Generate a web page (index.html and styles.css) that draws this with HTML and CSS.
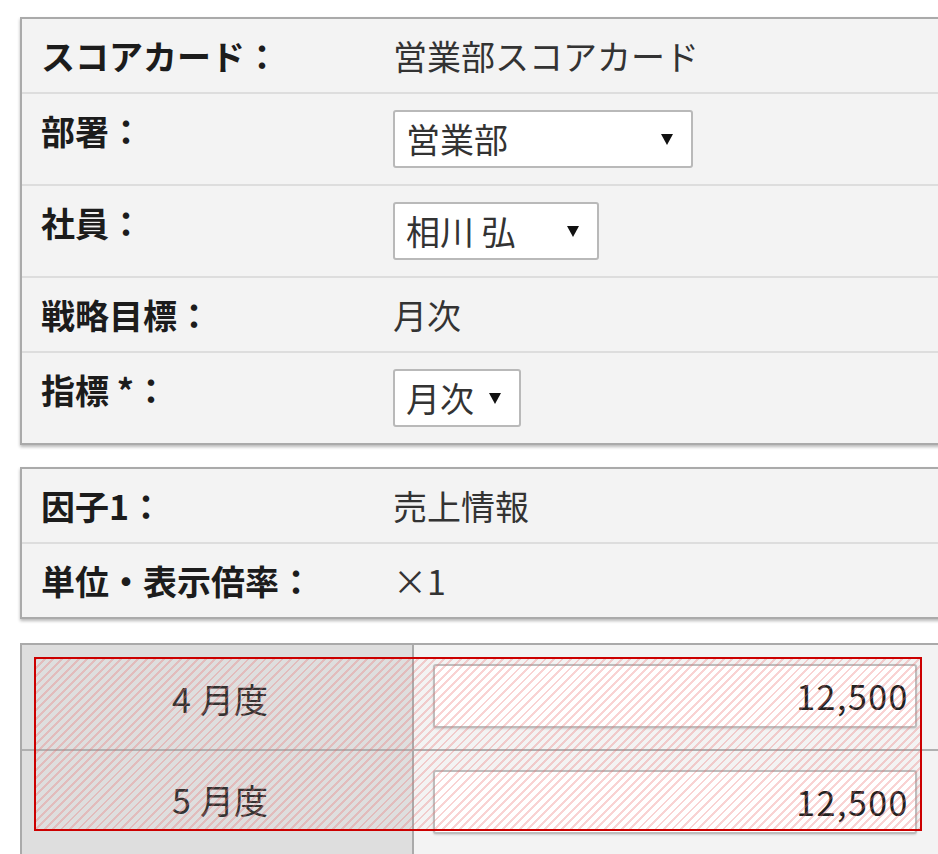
FILE: index.html
```html
<!DOCTYPE html>
<html lang="ja">
<head>
<meta charset="utf-8">
<title>スコアカード</title>
<link rel="stylesheet" href="styles.css">
</head>
<body>
<div class="page">
  <section class="panel">
    <div class="row">
      <div class="label">スコアカード：</div>
      <div class="value">営業部スコアカード</div>
    </div>
    <div class="row">
      <div class="label">部署：</div>
      <div class="value">
        <div class="select sel-dept"><span>営業部</span><svg class="arrow" viewBox="0 0 12 11" width="12" height="11"><polygon points="0,0 12,0 6,11" fill="#111"/></svg></div>
      </div>
    </div>
    <div class="row">
      <div class="label">社員：</div>
      <div class="value">
        <div class="select sel-emp"><span>相川 弘</span><svg class="arrow" viewBox="0 0 12 11" width="12" height="11"><polygon points="0,0 12,0 6,11" fill="#111"/></svg></div>
      </div>
    </div>
    <div class="row">
      <div class="label">戦略目標：</div>
      <div class="value">月次</div>
    </div>
    <div class="row">
      <div class="label">指標 *：</div>
      <div class="value">
        <div class="select sel-metric"><span>月次</span><svg class="arrow" viewBox="0 0 12 11" width="12" height="11"><polygon points="0,0 12,0 6,11" fill="#111"/></svg></div>
      </div>
    </div>
  </section>

  <section class="panel">
    <div class="row">
      <div class="label">因子1：</div>
      <div class="value">売上情報</div>
    </div>
    <div class="row">
      <div class="label">単位・表示倍率：</div>
      <div class="value">×1</div>
    </div>
  </section>

  <section class="panel grid-panel">
    <div class="grow">
      <div class="gcell-label"><span class="num">4</span>月度</div>
      <div class="gcell-input"><div class="numbox">12,500</div></div>
    </div>
    <div class="grow grow-last">
      <div class="gcell-label"><span class="num">5</span>月度</div>
      <div class="gcell-input"><div class="numbox">12,500</div></div>
    </div>
    <div class="highlight"></div>
  </section>
</div>
</body>
</html>
```

FILE: styles.css
```css
html, body {
  margin: 0;
  padding: 0;
  background: #ffffff;
  overflow: hidden;
}

body {
  font-family: "Noto Sans CJK JP", "Noto Sans", sans-serif;
  font-size: 34px;
  color: #333333;
}

.page {
  padding: 17px 0 0 20px;
  width: 980px;
}

.panel {
  width: 960px;
  background: #f3f3f3;
  border: 2px solid #aaaaaa;
  box-shadow: 0 2px 3px rgba(0, 0, 0, 0.28);
  margin-bottom: 22px;
}

.row {
  display: grid;
  grid-template-columns: 352px 1fr;
  padding: 16px 0 16px 19px;
  min-height: 41px;
  border-bottom: 2px solid #dddddd;
}

.row:last-child {
  border-bottom: none;
}

.label {
  font-weight: bold;
  color: #1c1c1c;
  line-height: 41px;
  white-space: nowrap;
}

.value {
  line-height: 41px;
  white-space: nowrap;
}

.select {
  box-sizing: border-box;
  height: 58px;
  background: #ffffff;
  border: 2px solid #b9b9b9;
  border-radius: 3px;
  display: flex;
  align-items: center;
  justify-content: space-between;
  padding: 0 18px 0 11px;
  line-height: 1;
}

.sel-dept { width: 300px; }
.sel-emp { width: 206px; }
.sel-metric { width: 128px; }

.arrow {
  display: block;
  flex: none;
}

.grid-panel {
  position: relative;
  box-shadow: none;
  margin-top: 24px;
  margin-bottom: 0;
}

.grow {
  display: grid;
  grid-template-columns: 392px 1fr;
  border-bottom: 2px solid #b0b0b0;
}

.grow-last {
  border-bottom: none;
}

.gcell-label {
  background: #dedede;
  border-right: 2px solid #aaaaaa;
  display: flex;
  align-items: center;
  justify-content: center;
  height: 104px;
  padding-left: 6px;
  padding-top: 2px;
  box-sizing: border-box;
}

.grow-last .gcell-label {
  height: 130px;
  align-items: flex-start;
  padding-top: 24px;
}

.num {
  margin-right: 9px;
}

.gcell-input {
  padding: 19px 0 21px 19px;
}

.numbox {
  box-sizing: border-box;
  width: 484px;
  height: 64px;
  background: #ffffff;
  border: 2px solid #bdbdbd;
  border-radius: 3px;
  box-shadow: 0 1px 2px rgba(0, 0, 0, 0.15);
  text-align: right;
  padding-right: 6px;
  line-height: 60px;
  letter-spacing: 1.5px;
  color: #222222;
}

.highlight {
  position: absolute;
  left: 12px;
  top: 12px;
  width: 888px;
  height: 174px;
  box-sizing: border-box;
  border: 2px solid #cc0000;
  background: repeating-linear-gradient(-45deg, rgba(235, 110, 110, 0.3) 0 2px, transparent 2px 6px);
  pointer-events: none;
}
```
